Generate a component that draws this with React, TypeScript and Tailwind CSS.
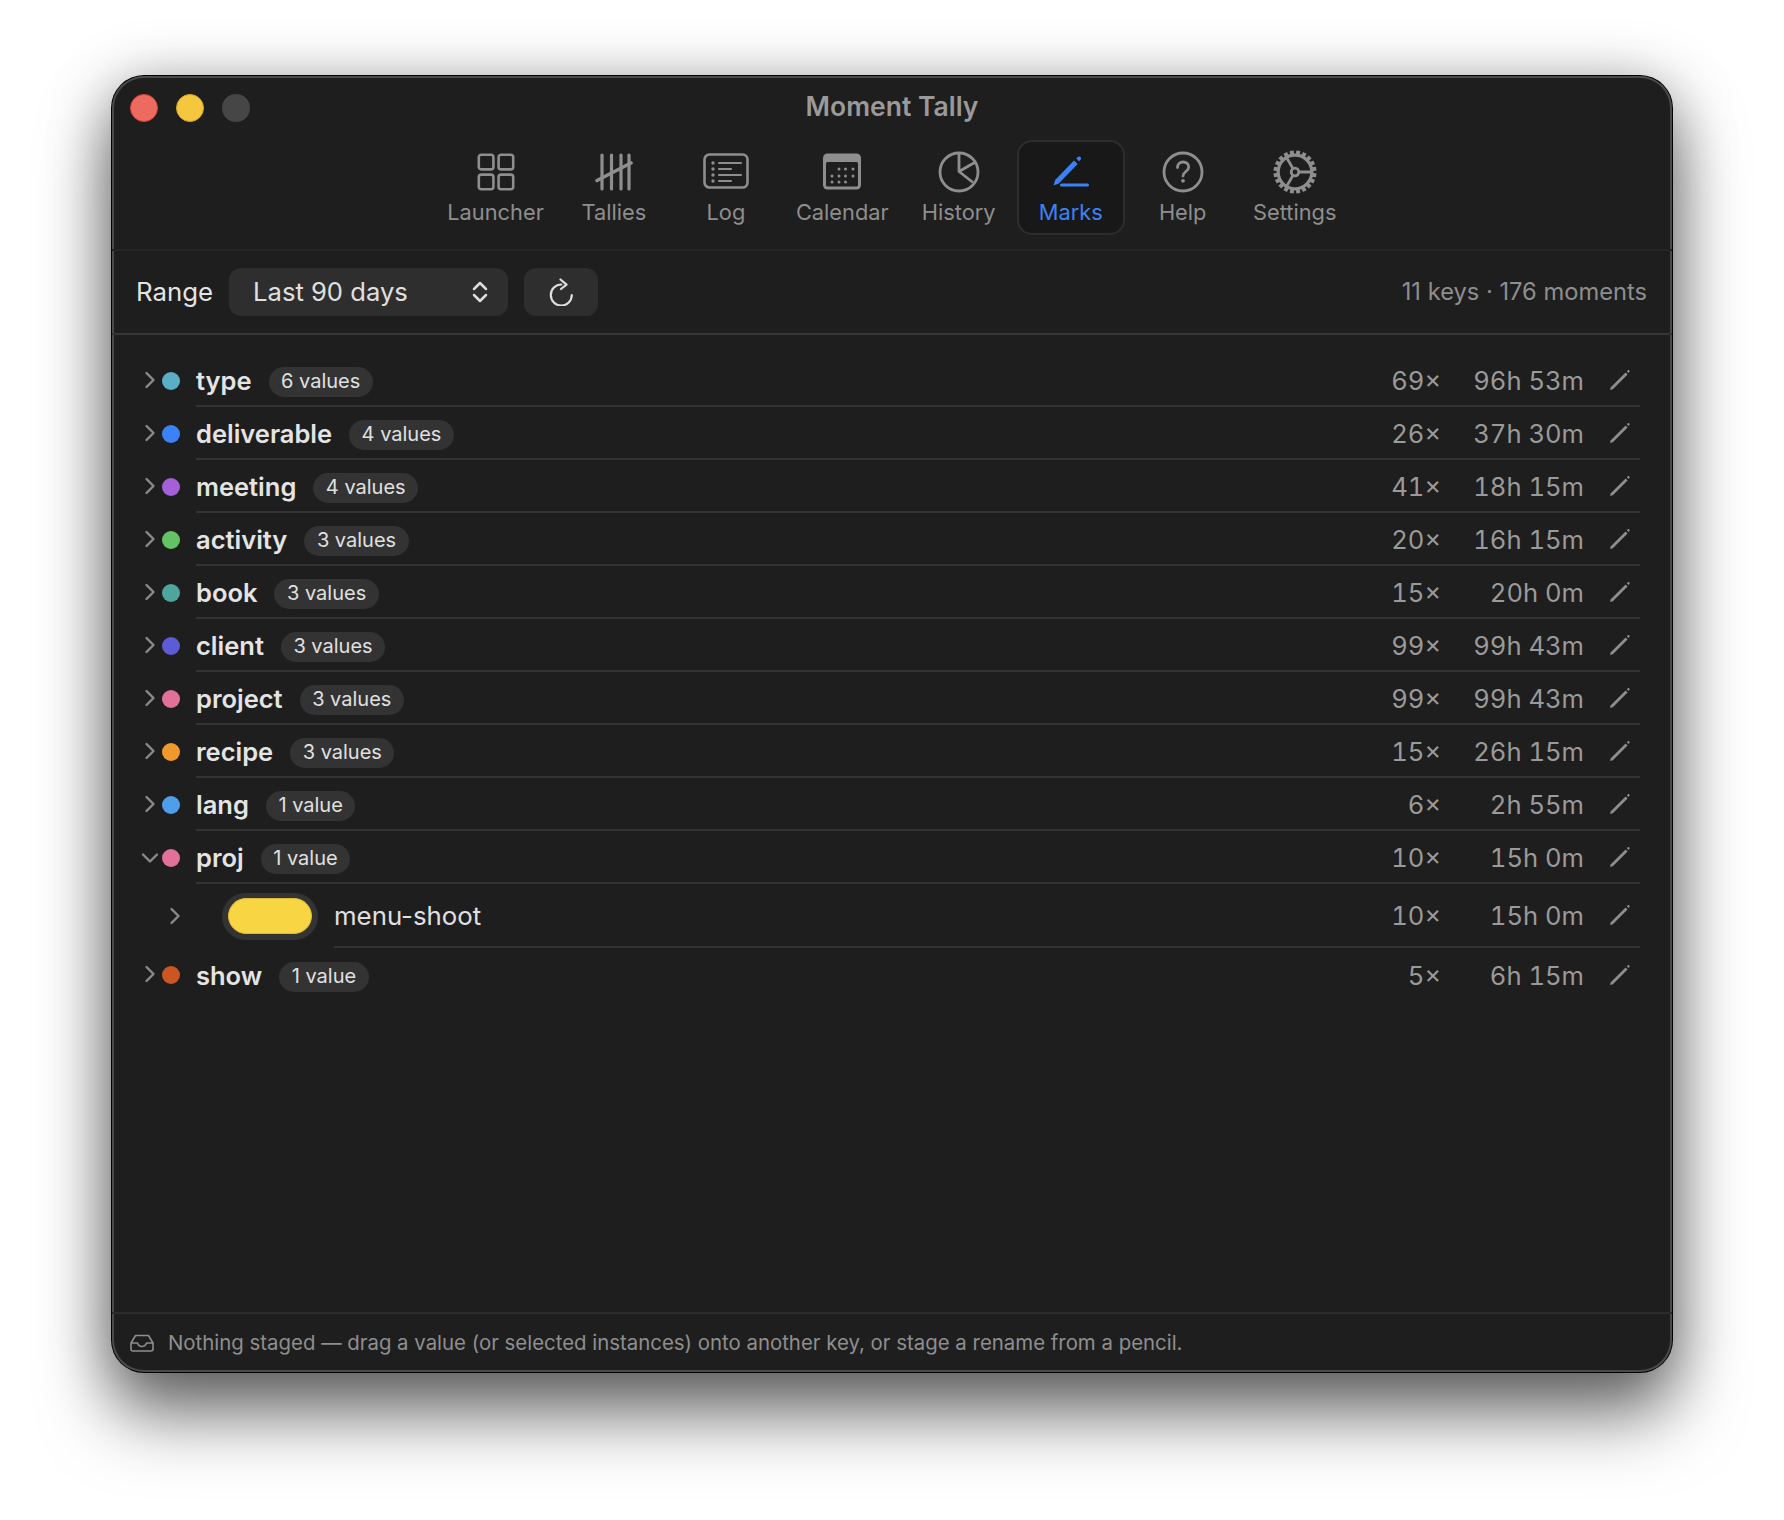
import { ReactNode } from 'react';

const font = '[font-family:Inter,"Liberation_Sans",sans-serif]';

function LauncherIcon() {
  return (
    <svg width="38" height="38" viewBox="0 0 38 38" fill="none" stroke="currentColor" strokeWidth="2.6">
      <rect x="1.8" y="1.8" width="14.6" height="14.6" rx="2.5" />
      <rect x="21.6" y="1.8" width="14.6" height="14.6" rx="2.5" />
      <rect x="1.8" y="21.6" width="14.6" height="14.6" rx="2.5" />
      <rect x="21.6" y="21.6" width="14.6" height="14.6" rx="2.5" />
    </svg>
  );
}

function TalliesIcon() {
  return (
    <svg width="38" height="38" viewBox="0 0 38 38" fill="none" stroke="currentColor" strokeWidth="3.6" strokeLinecap="round">
      <path d="M7 2v34M16.500 2v34M26 2v34M34 2v34" strokeWidth="3.2" />
      <path d="M2 27.500 36 10" />
    </svg>
  );
}

function LogIcon() {
  return (
    <svg width="46" height="38" viewBox="0 0 46 38" fill="none" stroke="currentColor" strokeWidth="2.6" strokeLinecap="round">
      <rect x="1.500" y="1.500" width="43" height="33" rx="5" />
      <path d="M16 10h22M16 16h12M16 22h22M16 28h12" strokeWidth="2.2" />
      <g fill="currentColor" stroke="none">
        <circle cx="10" cy="10" r="1.700" />
        <circle cx="10" cy="16" r="1.700" />
        <circle cx="10" cy="22" r="1.700" />
        <circle cx="10" cy="28" r="1.700" />
      </g>
    </svg>
  );
}

function CalendarIcon() {
  const dots = [
    [15, 14], [21.500, 14], [29, 14],
    [8, 21], [15, 21], [21.500, 21], [29, 21],
    [8, 27], [15, 27], [21.500, 27],
  ];
  return (
    <svg width="40" height="38" viewBox="0 0 40 38" fill="none">
      <rect x="1" y="0.500" width="38" height="36" rx="4.500" fill="currentColor" />
      <rect x="4" y="9" width="32" height="24.500" rx="1.500" fill="#1e1e1e" />
      {dots.map(([x, y]) => (
        <circle key={`${x}-${y}`} cx={x + 2} cy={y + 2} r="1.500" fill="currentColor" />
      ))}
    </svg>
  );
}

function HistoryIcon() {
  return (
    <svg width="42" height="42" viewBox="0 0 42 42" fill="none" stroke="currentColor" strokeWidth="2.800" strokeLinejoin="round">
      <circle cx="21" cy="21" r="19" />
      <path d="M21 2v18.500l14 11M21 20.500 37.500 11" />
    </svg>
  );
}

function MarksIcon() {
  return (
    <svg width="38" height="34" viewBox="0 0 38 34" fill="none">
      <path d="M1.500 30.500 3.200 25 22 5.500l3.600 3.400L6.800 28.400Z" fill="currentColor" />
      <path d="M24.300 3.500 25.800 2c.8-.8 1.900-.8 2.700 0 .8.800.8 1.900 0 2.700l-1.500 1.500Z" fill="currentColor" />
      <path d="M9.500 30h26" stroke="currentColor" strokeWidth="3" strokeLinecap="round" />
    </svg>
  );
}

function HelpIcon() {
  return (
    <svg width="42" height="42" viewBox="0 0 42 42" fill="none" stroke="currentColor" strokeWidth="2.800">
      <circle cx="21" cy="21" r="19" />
      <path d="M15.500 16.500c0-3.300 2.400-5.500 5.600-5.500s5.600 2.100 5.600 5c0 4.500-5.700 4.500-5.700 9" strokeLinecap="round" />
      <circle cx="21" cy="29.800" r="1.900" fill="currentColor" stroke="none" />
    </svg>
  );
}

function SettingsIcon() {
  const teeth = Array.from({ length: 20 }, (_, i) => i * 18);
  return (
    <svg width="44" height="44" viewBox="0 0 44 44" fill="none" stroke="currentColor" strokeWidth="2.800">
      <circle cx="22" cy="22" r="16.800" strokeWidth="3.200" />
      <circle cx="22" cy="22" r="3.800" />
      <path d="M25.800 22H38M20.100 18.700 13.800 8M20.100 25.300 13.800 36" />
      {teeth.map((deg) => (
        <rect key={deg} x="20" y="0.500" width="4" height="5" fill="currentColor" stroke="none" transform={`rotate(${deg + 9} 22 22)`} />
      ))}
    </svg>
  );
}

function RowPencil() {
  return (
    <svg width="22" height="22" viewBox="0 0 22 22" fill="none" className="text-[#8e8e8e]">
      <path d="M1 21l.8-2.800L16.600 3.400l2 2L3.800 20.200Z" fill="currentColor" />
      <path d="M17.800 2.200l.8-.8c.5-.5 1.200-.5 1.700 0s.5 1.200 0 1.700l-.8.8Z" fill="currentColor" />
    </svg>
  );
}

function Chevron({ open }: { open?: boolean }) {
  return (
    <svg width="20" height="20" viewBox="0 0 20 20" fill="none" stroke="#8a8a8a" strokeWidth="2.400" strokeLinecap="round" strokeLinejoin="round">
      {open ? <path d="M3 6.500l7 7 7-7" /> : <path d="M6.500 3l7 7-7 7" />}
    </svg>
  );
}

function Tab({ label, icon, active }: { label: string; icon: ReactNode; active?: boolean }) {
  return (
    <div
      className={`flex h-[95px] min-w-[108px] flex-col items-center rounded-[15px] border-2 px-[10px] ${
        active ? 'border-[#2d2d2d] bg-[#181818] text-[#3b82f6]' : 'border-transparent text-[#8e8e8e]'
      }`}
    >
      <div className="flex h-[56px] items-center pt-[6px] pb-[2px]">{icon}</div>
      <div className="text-[21.8px] leading-[28px] whitespace-nowrap">{label}</div>
    </div>
  );
}

type Row = { name: string; dot: string; values: string; count: string; time: string };

const rowsTop: Row[] = [
  { name: 'type', dot: 'bg-[#5aafc6]', values: '6 values', count: '69×', time: '96h 53m' },
  { name: 'deliverable', dot: 'bg-[#3b82f6]', values: '4 values', count: '26×', time: '37h 30m' },
  { name: 'meeting', dot: 'bg-[#a55fd9]', values: '4 values', count: '41×', time: '18h 15m' },
  { name: 'activity', dot: 'bg-[#62c264]', values: '3 values', count: '20×', time: '16h 15m' },
  { name: 'book', dot: 'bg-[#4fa59b]', values: '3 values', count: '15×', time: '20h 0m' },
  { name: 'client', dot: 'bg-[#5c5cd6]', values: '3 values', count: '99×', time: '99h 43m' },
  { name: 'project', dot: 'bg-[#e2719a]', values: '3 values', count: '99×', time: '99h 43m' },
  { name: 'recipe', dot: 'bg-[#f09a2e]', values: '3 values', count: '15×', time: '26h 15m' },
  { name: 'lang', dot: 'bg-[#4f9eea]', values: '1 value', count: '6×', time: '2h 55m' },
];

function Stats({ count, time }: { count: string; time: string }) {
  return (
    <div className="ml-auto flex items-center text-[25.6px] text-[#9a9a9a] tabular-nums">
      <span>{count}</span>
      <span className="w-[143px] text-right">{time}</span>
      <span className="ml-[25px] mr-[9px] flex w-[22px] pb-[2px]">
        <RowPencil />
      </span>
    </div>
  );
}

function KeyRow({ row, open, last }: { row: Row; open?: boolean; last?: boolean }) {
  return (
    <div className="flex h-[53px] items-stretch pl-7">
      <div className={`flex w-[22px] items-center ${open ? '' : 'pb-[2px]'}`}>
        <Chevron open={open} />
      </div>
      <div className="flex items-center">
        <span className={`h-[18px] w-[18px] rounded-full ${row.dot}`} />
      </div>
      <div className={`ml-4 flex flex-1 items-center pt-[4px] ${last ? '' : 'border-b-2 border-[#333333]'}`}>
        <span className="text-[25.5px] font-semibold text-[#e4e4e4]">{row.name}</span>
        <span className="ml-[17px] flex h-[30px] items-center rounded-full bg-[#333333] px-[12.5px] pb-[1px] text-[20px] text-[#e0e0e0]">
          {row.values}
        </span>
        <Stats count={row.count} time={row.time} />
      </div>
    </div>
  );
}

export default function App() {
  return (
    <div className={`h-[1520px] bg-white pt-[76px] pl-[112px] antialiased ${font}`}>
      <div className="flex h-[1296px] w-[1560px] flex-col rounded-[32px] bg-[#1e1e1e] shadow-[0_0_0_1px_#000000,inset_0_0_0_2px_#4a4a4a,0_44px_70px_rgba(0,0,0,0.5),0_8px_60px_rgba(0,0,0,0.35)]">
        {/* Title bar */}
        <div className="grid h-[64px] grid-cols-[1fr_auto_1fr] items-center px-[18px]">
          <div className="flex gap-[18px]">
            <span className="h-[28px] w-[28px] rounded-full border border-[#d9433e] bg-[#ed6a5e]" />
            <span className="h-[28px] w-[28px] rounded-full border border-[#d6a52a] bg-[#f4c73e]" />
            <span className="h-[28px] w-[28px] rounded-full bg-[#464646]" />
          </div>
          <div className="pb-[2px] text-[26.5px] font-semibold text-[#9a9a9a]">Moment Tally</div>
          <div />
        </div>

        {/* Toolbar */}
        <div className="flex h-[111px] justify-center gap-1 border-b-2 border-[#242424]">
          <Tab label="Launcher" icon={<LauncherIcon />} />
          <Tab label="Tallies" icon={<TalliesIcon />} />
          <Tab label="Log" icon={<LogIcon />} />
          <Tab label="Calendar" icon={<CalendarIcon />} />
          <Tab label="History" icon={<HistoryIcon />} />
          <Tab label="Marks" icon={<MarksIcon />} active />
          <Tab label="Help" icon={<HelpIcon />} />
          <Tab label="Settings" icon={<SettingsIcon />} />
        </div>

        {/* Range bar */}
        <div className="flex h-[84px] items-center border-b-2 border-[#363636] pr-[25px] pl-6">
          <span className="text-[25.8px] text-[#e4e4e4]">Range</span>
          <div className="ml-[16px] flex h-[48px] w-[279px] items-center justify-between rounded-[12px] bg-[#2e2e2e] pr-[18px] pl-6 text-[25.6px] text-[#e0e0e0]">
            <span>Last 90 days</span>
            <svg width="20" height="24" viewBox="0 0 20 24" fill="none" stroke="#dddddd" strokeWidth="2.500" strokeLinecap="round" strokeLinejoin="round">
              <path d="M4 9l6-6 6 6M4 15l6 6 6-6" />
            </svg>
          </div>
          <div className="ml-4 flex h-[48px] w-[74px] items-center justify-center rounded-[12px] bg-[#2e2e2e]">
            <svg width="26" height="28" viewBox="0 0 26 28" fill="none" stroke="#dddddd" strokeWidth="2.200" strokeLinecap="round" strokeLinejoin="round">
              <path d="M13.300 6.500A10.500 10.500 0 1 0 23.800 17" />
              <path d="M12.500 1.500 18.500 6.700 13 11" />
            </svg>
          </div>
          <span className="ml-auto text-[23.7px] text-[#8e8e8e]">11 keys · 176 moments</span>
        </div>

        {/* Keys */}
        <div className="flex-1 pt-[19px] pr-8">
          {rowsTop.map((row) => (
            <KeyRow key={row.name} row={row} />
          ))}
          <KeyRow row={{ name: 'proj', dot: 'bg-[#e2719a]', values: '1 value', count: '10×', time: '15h 0m' }} open />
          <div className="flex h-[64px] items-stretch pl-[53px]">
            <div className="flex w-[57px] items-center">
              <Chevron />
            </div>
            <div className="flex items-center">
              <span className="flex h-[47px] w-[96px] items-center justify-center rounded-full bg-[#333333]">
                <span className="h-[36px] w-[84px] rounded-full border border-[#dcb93a] bg-[#f7d543]" />
              </span>
            </div>
            <div className="ml-4 flex flex-1 items-center border-b-2 border-[#333333] pt-[2px]">
              <span className="text-[25.8px] text-[#e0e0e0]">menu-shoot</span>
              <Stats count="10×" time="15h 0m" />
            </div>
          </div>
          <KeyRow row={{ name: 'show', dot: 'bg-[#cc5524]', values: '1 value', count: '5×', time: '6h 15m' }} last />
        </div>

        {/* Footer */}
        <div className="flex h-[60px] items-center border-t-2 border-[#2c2c2c] pl-[18px] text-[20.4px] text-[#8e8e8e]">
          <svg width="24" height="18" viewBox="0 0 24 18" fill="none" stroke="#8e8e8e" strokeWidth="1.600" strokeLinejoin="round">
            <path d="M5.500 1.500h13L23 9v6a2 2 0 0 1-2 2H3a2 2 0 0 1-2-2V9Z" />
            <path d="M1 9h6.500c.8 2.500 2.500 3.500 4.500 3.500s3.700-1 4.500-3.500H23" />
          </svg>
          <span className="ml-[14px]">
            Nothing staged — drag a value (or selected instances) onto another key, or stage a rename from a pencil.
          </span>
        </div>
      </div>
    </div>
  );
}
